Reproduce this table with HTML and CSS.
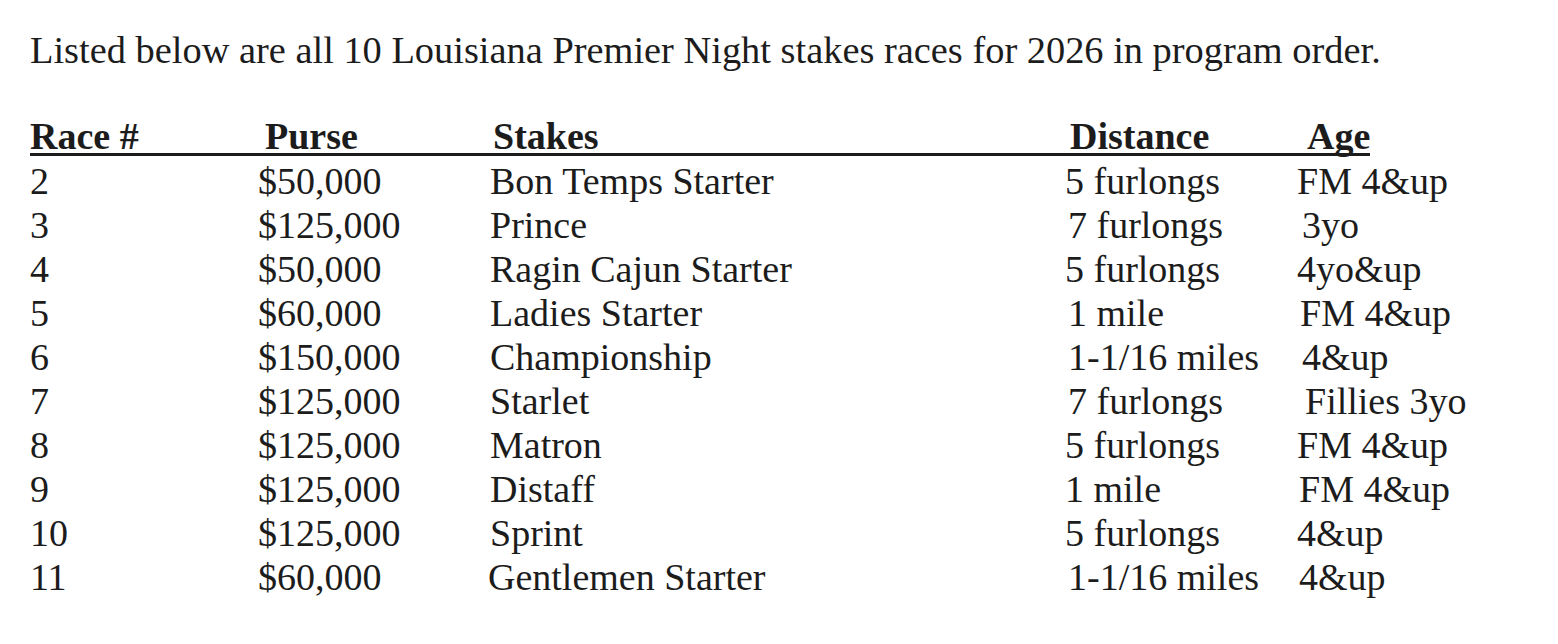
FILE: index.html
```html
<!DOCTYPE html>
<html>
<head>
<meta charset="utf-8">
<link rel="stylesheet" href="styles.css">
</head>
<body>
<div class="page">
  <p class="intro">Listed below are all 10 Louisiana Premier Night stakes races for 2026 in program order.</p>
  <div class="table">
    <div class="row head">
      <div class="c1 h">Race #</div>
      <div class="c2 h hp">Purse</div>
      <div class="c3 h hs">Stakes</div>
      <div class="c4 h hd">Distance</div>
      <div class="c5 h ha">Age</div>
    </div>
    <div class="row"><div>2</div><div>$50,000</div><div>Bon Temps Starter</div><div>5 furlongs</div><div>FM 4&amp;up</div></div>
    <div class="row"><div>3</div><div>$125,000</div><div>Prince</div><div class="i1">7 furlongs</div><div class="i5">3yo</div></div>
    <div class="row"><div>4</div><div>$50,000</div><div>Ragin Cajun Starter</div><div>5 furlongs</div><div>4yo&amp;up</div></div>
    <div class="row"><div>5</div><div>$60,000</div><div>Ladies Starter</div><div class="i1">1 mile</div><div class="i3">FM 4&amp;up</div></div>
    <div class="row"><div>6</div><div>$150,000</div><div>Championship</div><div class="i1">1-1/16 miles</div><div class="i5">4&amp;up</div></div>
    <div class="row"><div>7</div><div>$125,000</div><div>Starlet</div><div class="i1">7 furlongs</div><div class="i8">Fillies 3yo</div></div>
    <div class="row"><div>8</div><div>$125,000</div><div>Matron</div><div>5 furlongs</div><div>FM 4&amp;up</div></div>
    <div class="row"><div>9</div><div>$125,000</div><div>Distaff</div><div>1 mile</div><div class="i2">FM 4&amp;up</div></div>
    <div class="row"><div>10</div><div>$125,000</div><div>Sprint</div><div>5 furlongs</div><div>4&amp;up</div></div>
    <div class="row"><div>11</div><div>$60,000</div><div class="n1">Gentlemen Starter</div><div class="i1">1-1/16 miles</div><div class="i2">4&amp;up</div></div>
  </div>
</div>
</body>
</html>
```
FILE: styles.css
```css
html, body {
  margin: 0;
  padding: 0;
  background: #ffffff;
}
body {
  font-family: "Liberation Serif", "Times New Roman", serif;
  color: #1c1c1c;
}
.page {
  padding: 30px 0 0 30px;
}
.intro {
  margin: 0;
  font-size: 38.4px;
  line-height: 40px;
  white-space: nowrap;
}
.table {
  margin-top: 49px;
  width: 1340px;
}
.row {
  display: grid;
  grid-template-columns: 228px 232px 575px 232px 73px;
  font-size: 38px;
  line-height: 44px;
  white-space: nowrap;
}
.row.head {
  font-weight: bold;
  line-height: 34px;
  border-bottom: 3px solid #1c1c1c;
  margin-bottom: 3px;
}
.hp { padding-left: 7px; }
.hs { padding-left: 3px; }
.hd { padding-left: 5px; }
.ha { padding-left: 10px; }
.i1 { padding-left: 3px; }
.i2 { padding-left: 2px; }
.i3 { padding-left: 3px; }
.i5 { padding-left: 5px; }
.i8 { padding-left: 8px; }
.n1 { margin-left: -2px; }
```
